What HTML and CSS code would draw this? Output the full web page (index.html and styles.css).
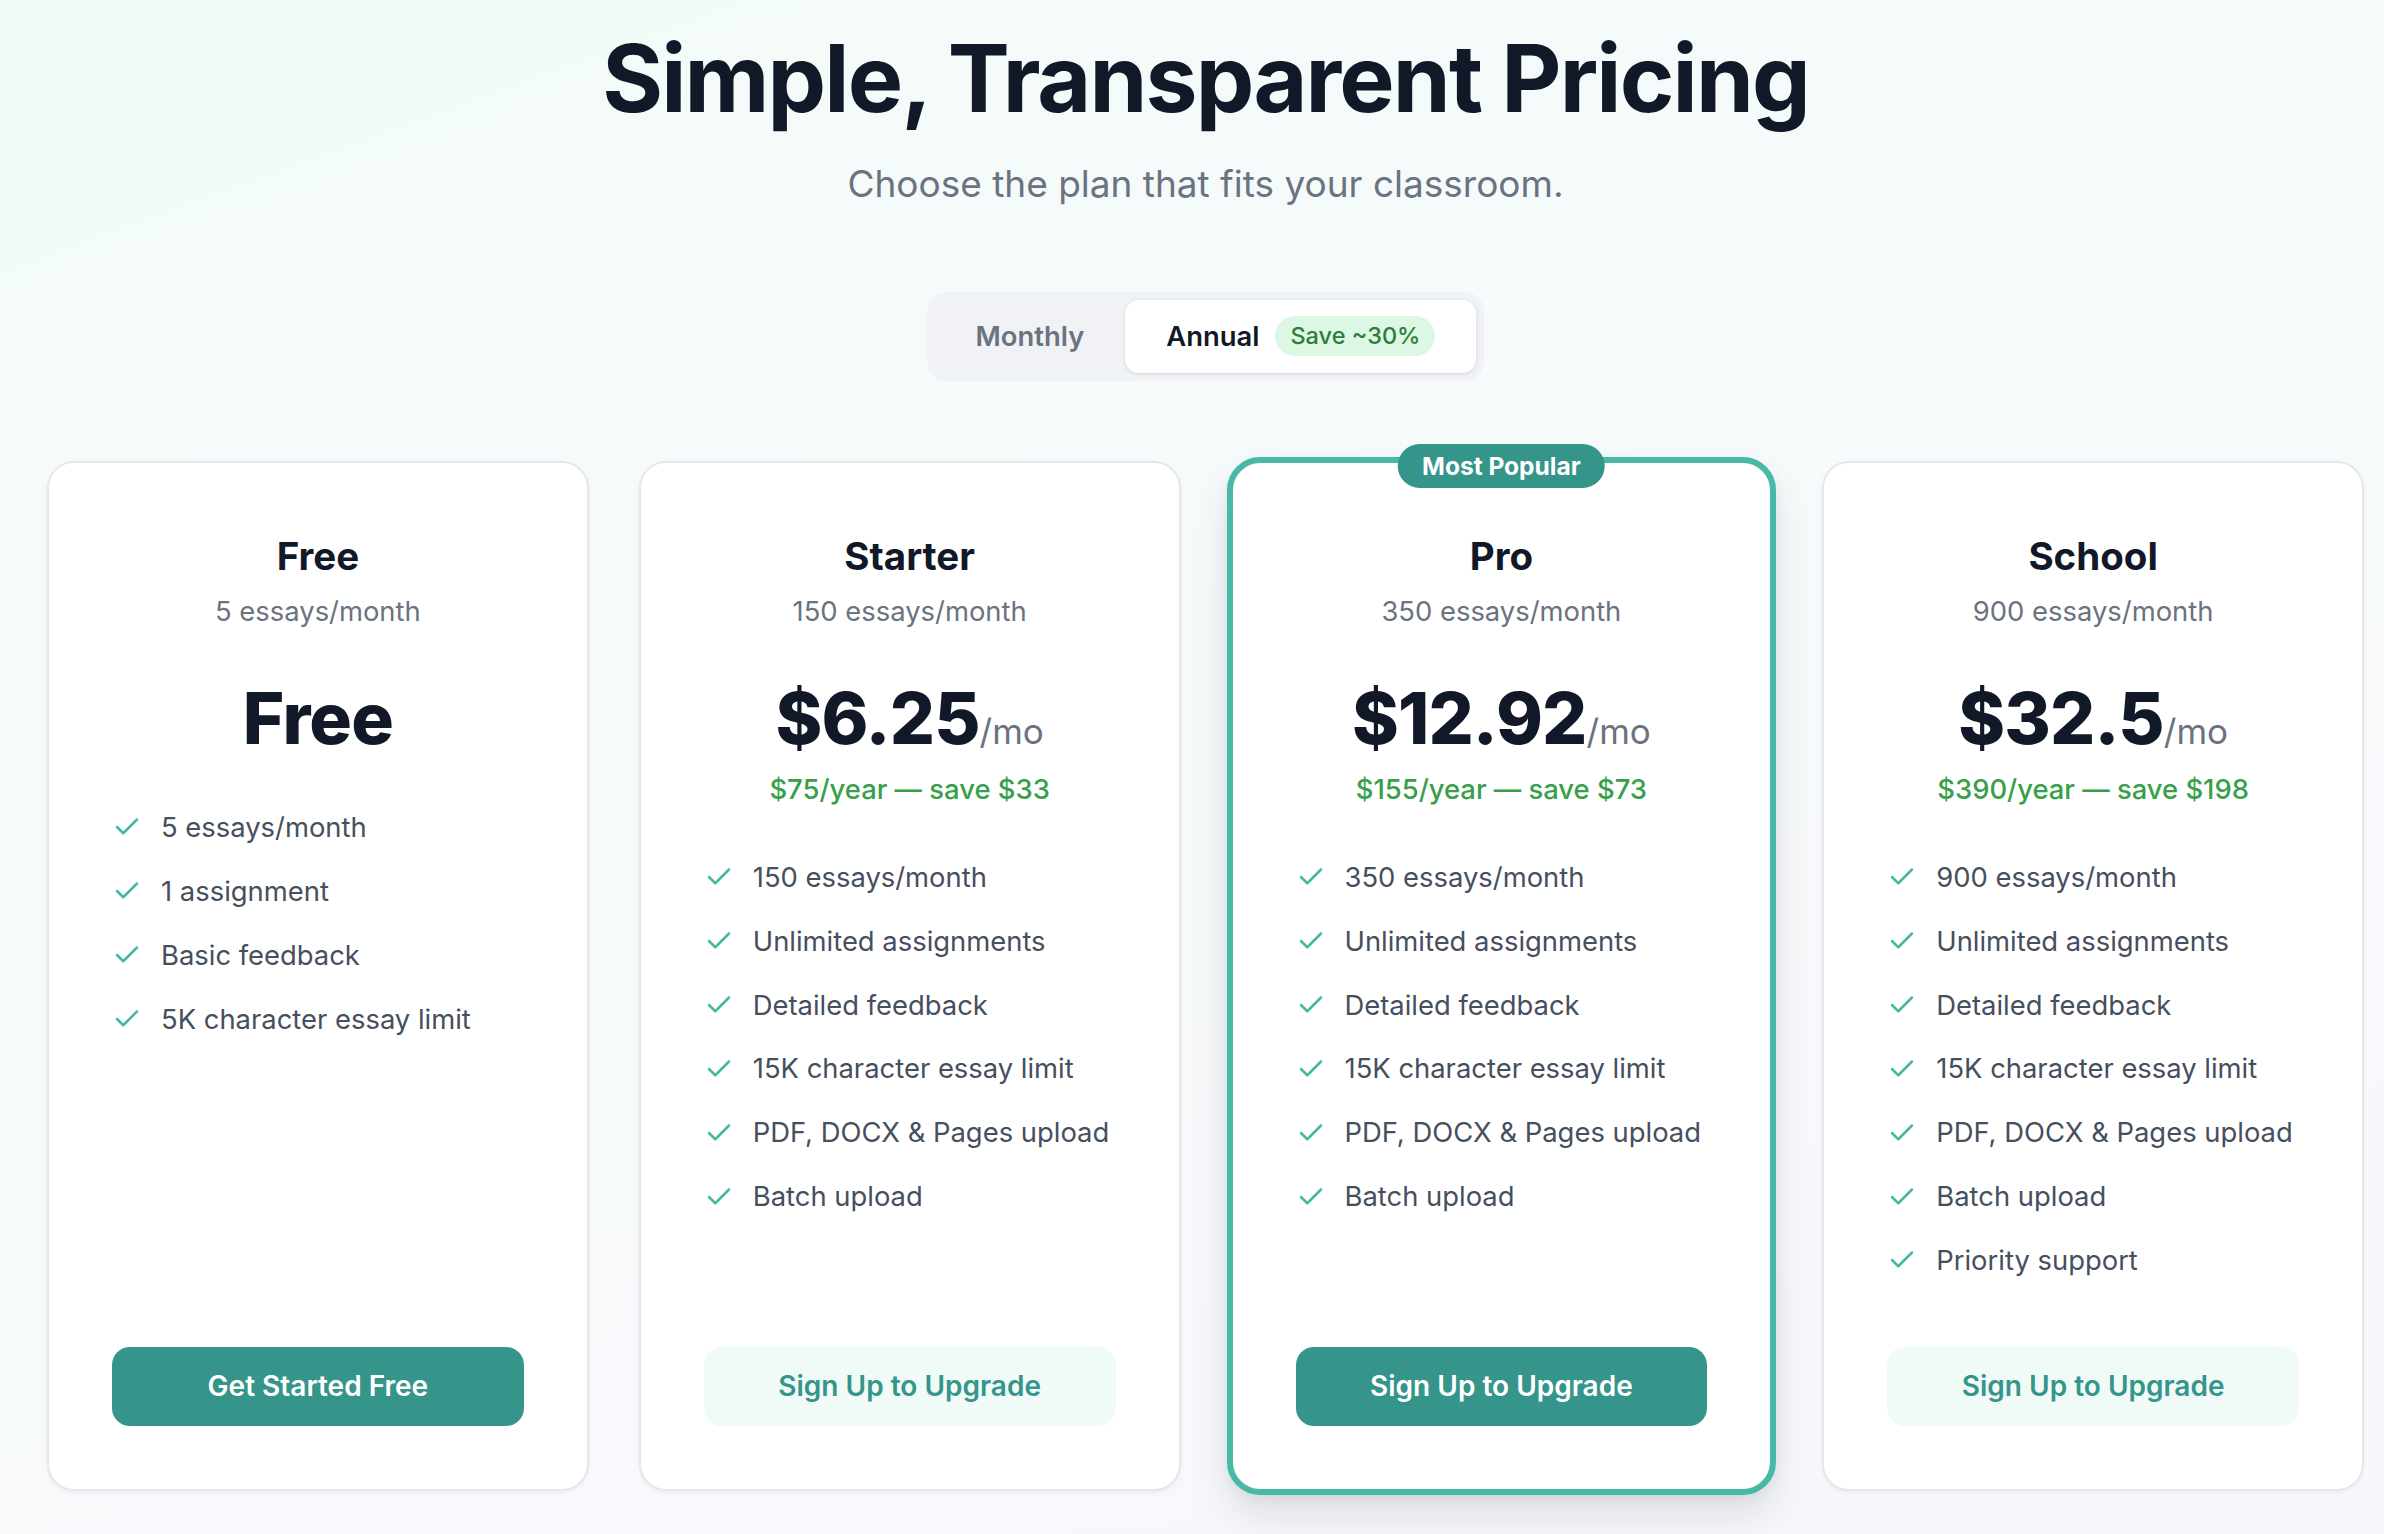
FILE: index.html
```html
<!DOCTYPE html>
<html lang="en">
<head>
<meta charset="utf-8">
<title>Pricing</title>
<link rel="stylesheet" href="styles.css">
</head>
<body>
<main class="page">
  <header class="hero">
    <h1 class="title">Simple, Transparent Pricing</h1>
    <p class="subtitle">Choose the plan that fits your classroom.</p>
    <div class="toggle">
      <button class="toggle-btn">Monthly</button>
      <button class="toggle-btn active">Annual <span class="save">Save ~30%</span></button>
    </div>
  </header>

  <section class="plans">
    <article class="card">
      <h2 class="plan-name">Free</h2>
      <p class="plan-quota">5 essays/month</p>
      <div class="price"><span class="amount">Free</span></div>
      <ul class="features">
        <li><svg class="check" viewBox="0 0 24 24"><path d="M20 6 9 17l-5-5"/></svg>5 essays/month</li>
        <li><svg class="check" viewBox="0 0 24 24"><path d="M20 6 9 17l-5-5"/></svg>1 assignment</li>
        <li><svg class="check" viewBox="0 0 24 24"><path d="M20 6 9 17l-5-5"/></svg>Basic feedback</li>
        <li><svg class="check" viewBox="0 0 24 24"><path d="M20 6 9 17l-5-5"/></svg>5K character essay limit</li>
      </ul>
      <button class="cta primary">Get Started Free</button>
    </article>

    <article class="card">
      <h2 class="plan-name">Starter</h2>
      <p class="plan-quota">150 essays/month</p>
      <div class="price"><span class="amount">$6.25</span><span class="per">/mo</span></div>
      <p class="yearly">$75/year — save $33</p>
      <ul class="features">
        <li><svg class="check" viewBox="0 0 24 24"><path d="M20 6 9 17l-5-5"/></svg>150 essays/month</li>
        <li><svg class="check" viewBox="0 0 24 24"><path d="M20 6 9 17l-5-5"/></svg>Unlimited assignments</li>
        <li><svg class="check" viewBox="0 0 24 24"><path d="M20 6 9 17l-5-5"/></svg>Detailed feedback</li>
        <li><svg class="check" viewBox="0 0 24 24"><path d="M20 6 9 17l-5-5"/></svg>15K character essay limit</li>
        <li><svg class="check" viewBox="0 0 24 24"><path d="M20 6 9 17l-5-5"/></svg>PDF, DOCX &amp; Pages upload</li>
        <li><svg class="check" viewBox="0 0 24 24"><path d="M20 6 9 17l-5-5"/></svg>Batch upload</li>
      </ul>
      <button class="cta secondary">Sign Up to Upgrade</button>
    </article>

    <article class="card featured">
      <span class="popular">Most Popular</span>
      <h2 class="plan-name">Pro</h2>
      <p class="plan-quota">350 essays/month</p>
      <div class="price"><span class="amount">$12.92</span><span class="per">/mo</span></div>
      <p class="yearly">$155/year — save $73</p>
      <ul class="features">
        <li><svg class="check" viewBox="0 0 24 24"><path d="M20 6 9 17l-5-5"/></svg>350 essays/month</li>
        <li><svg class="check" viewBox="0 0 24 24"><path d="M20 6 9 17l-5-5"/></svg>Unlimited assignments</li>
        <li><svg class="check" viewBox="0 0 24 24"><path d="M20 6 9 17l-5-5"/></svg>Detailed feedback</li>
        <li><svg class="check" viewBox="0 0 24 24"><path d="M20 6 9 17l-5-5"/></svg>15K character essay limit</li>
        <li><svg class="check" viewBox="0 0 24 24"><path d="M20 6 9 17l-5-5"/></svg>PDF, DOCX &amp; Pages upload</li>
        <li><svg class="check" viewBox="0 0 24 24"><path d="M20 6 9 17l-5-5"/></svg>Batch upload</li>
      </ul>
      <button class="cta primary">Sign Up to Upgrade</button>
    </article>

    <article class="card">
      <h2 class="plan-name">School</h2>
      <p class="plan-quota">900 essays/month</p>
      <div class="price"><span class="amount">$32.5</span><span class="per">/mo</span></div>
      <p class="yearly">$390/year — save $198</p>
      <ul class="features">
        <li><svg class="check" viewBox="0 0 24 24"><path d="M20 6 9 17l-5-5"/></svg>900 essays/month</li>
        <li><svg class="check" viewBox="0 0 24 24"><path d="M20 6 9 17l-5-5"/></svg>Unlimited assignments</li>
        <li><svg class="check" viewBox="0 0 24 24"><path d="M20 6 9 17l-5-5"/></svg>Detailed feedback</li>
        <li><svg class="check" viewBox="0 0 24 24"><path d="M20 6 9 17l-5-5"/></svg>15K character essay limit</li>
        <li><svg class="check" viewBox="0 0 24 24"><path d="M20 6 9 17l-5-5"/></svg>PDF, DOCX &amp; Pages upload</li>
        <li><svg class="check" viewBox="0 0 24 24"><path d="M20 6 9 17l-5-5"/></svg>Batch upload</li>
        <li><svg class="check" viewBox="0 0 24 24"><path d="M20 6 9 17l-5-5"/></svg>Priority support</li>
      </ul>
      <button class="cta secondary">Sign Up to Upgrade</button>
    </article>
  </section>
</main>
</body>
</html>
```

FILE: styles.css
```css
* { box-sizing: border-box; }

html, body {
  margin: 0;
  padding: 0;
}

body {
  min-height: 1534px;
  font-family: Inter, "Noto Sans", "Liberation Sans", sans-serif;
  color: #111827;
  background: linear-gradient(160deg, #f2fbf8 0%, #f7fafb 50%, #f7f7fc 100%);
  overflow: hidden;
}

.page {
  padding: 33px 20px 0 47px;
}

.hero {
  display: flex;
  flex-direction: column;
  align-items: center;
  text-align: center;
}

.title {
  margin: 0;
  font-size: 93px;
  line-height: 91px;
  font-weight: 700;
  letter-spacing: -0.02em;
  color: #111827;
}

.subtitle {
  margin: 36px 0 0;
  font-size: 37px;
  line-height: 48.6px;
  color: #6b7280;
}

.toggle {
  margin-top: 83px;
  display: flex;
  padding: 8px;
  background: #f1f2f5;
  border-radius: 20px;
}

.toggle-btn {
  font-family: inherit;
  border: 0;
  background: transparent;
  font-size: 27.4px;
  line-height: 42.6px;
  font-weight: 600;
  color: #6b7280;
  padding: 15.2px 41px;
  border-radius: 14px;
  display: flex;
  align-items: center;
  gap: 16px;
}

.toggle-btn.active {
  background: #ffffff;
  color: #111827;
  box-shadow: 0 1px 4px rgba(17, 24, 39, 0.12);
}

.save {
  font-size: 23.5px;
  line-height: 30px;
  font-weight: 500;
  color: #2e7d3a;
  background: #dcf8e4;
  border-radius: 999px;
  padding: 5px 15px;
}

.plans {
  margin-top: 80px;
  display: grid;
  grid-template-columns: repeat(4, 1fr);
  gap: 50px;
}

.card {
  position: relative;
  display: flex;
  flex-direction: column;
  background: #ffffff;
  border: 2px solid #e6e7ec;
  border-radius: 27px;
  padding: 69px 63px 63px;
  box-shadow: 0 2px 4px rgba(17, 24, 39, 0.05);
}

.card.featured {
  margin: -4px;
  border: 6px solid #47b9a6;
  border-radius: 33px;
  box-shadow: 0 22px 40px rgba(17, 24, 39, 0.10), 0 6px 12px rgba(17, 24, 39, 0.05);
}

.popular {
  position: absolute;
  top: -19px;
  left: 50%;
  transform: translateX(-50%);
  background: #36958a;
  color: #ffffff;
  font-size: 24.5px;
  line-height: 30px;
  font-weight: 700;
  padding: 7px 24px;
  border-radius: 999px;
  white-space: nowrap;
}

.plan-name {
  margin: 0;
  text-align: center;
  font-size: 38.5px;
  line-height: 49px;
  font-weight: 700;
  color: #111827;
}

.plan-quota {
  margin: 9px 0 0;
  text-align: center;
  font-size: 27.4px;
  line-height: 42.6px;
  color: #6b7280;
}

.price {
  margin-top: 50px;
  display: flex;
  justify-content: center;
  align-items: baseline;
}

.amount {
  font-size: 71px;
  line-height: 73px;
  font-weight: 800;
  letter-spacing: -0.012em;
  color: #111827;
}

.per {
  font-size: 35px;
  line-height: 40px;
  color: #6b7280;
}

.yearly {
  margin: 13px 0 0;
  text-align: center;
  font-size: 27.4px;
  line-height: 42.6px;
  font-weight: 500;
  color: #36a04a;
}

.features {
  list-style: none;
  margin: 51px 0 65px;
  padding: 0;
  display: flex;
  flex-direction: column;
  gap: 21.3px;
}

.yearly + .features {
  margin-top: 45px;
}

.features li {
  display: flex;
  align-items: center;
  gap: 19px;
  font-size: 27.4px;
  line-height: 42.6px;
  color: #464f5d;
}

.check {
  width: 30px;
  height: 30px;
  flex: none;
  fill: none;
  stroke: #45b8a4;
  stroke-width: 2;
  stroke-linecap: round;
  stroke-linejoin: round;
}

.cta {
  margin-top: auto;
  width: 100%;
  font-family: inherit;
  border: 0;
  border-radius: 18px;
  padding: 18.5px 20px;
  font-size: 28px;
  line-height: 42.6px;
  font-weight: 600;
}

.cta.primary {
  background: #36958a;
  color: #ffffff;
}

.cta.secondary {
  background: #f0fbf7;
  color: #36958a;
}
```
